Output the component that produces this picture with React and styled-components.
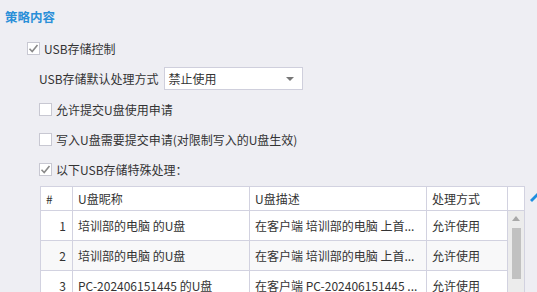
import React from 'react'
import styled, { createGlobalStyle } from 'styled-components'

const Global = createGlobalStyle`
  html, body {
    margin: 0;
    background: #eeeef3;
    overflow: hidden;
  }
  body {
    font-family: "Noto Sans CJK SC", "Noto Sans", sans-serif;
    font-size: 12px;
    color: #333;
  }
`

const rows = [
  { id: 1, name: '培训部的电脑 的U盘', desc: '在客户端 培训部的电脑 上首...', mode: '允许使用' },
  { id: 2, name: '培训部的电脑 的U盘', desc: '在客户端 培训部的电脑 上首...', mode: '允许使用' },
  { id: 3, name: 'PC-202406151445 的U盘', desc: '在客户端 PC-202406151445 ...', mode: '允许使用' },
]

export default function App() {
  return (
    <Page>
      <Global />
      <Title>策略内容</Title>
      <Section>
        <CheckRow>
          <Check checked />
          <span>USB存储控制</span>
        </CheckRow>
        <Sub>
          <SelectRow>
            <span>USB存储默认处理方式</span>
            <Select>
              <span>禁止使用</span>
              <Caret />
            </Select>
          </SelectRow>
          <CheckRow $top={9}>
            <Check />
            <span>允许提交U盘使用申请</span>
          </CheckRow>
          <CheckRow $top={10}>
            <Check />
            <span>写入U盘需要提交申请(对限制写入的U盘生效)</span>
          </CheckRow>
          <CheckRow $top={10}>
            <Check checked />
            <span>以下USB存储特殊处理：</span>
          </CheckRow>
          <TableWrap>
            <Table>
              <Head>
                <HCell>#</HCell>
                <HCell>U盘昵称</HCell>
                <HCell>U盘描述</HCell>
                <HCell>处理方式</HCell>
                <HCell $last />
              </Head>
              <Body>
                <Rows>
                  {rows.map((r, i) => (
                    <Row key={r.id} $alt={i % 2 === 1}>
                      <Cell $num>{r.id}</Cell>
                      <Cell>{r.name}</Cell>
                      <Cell>{r.desc}</Cell>
                      <Cell>{r.mode}</Cell>
                    </Row>
                  ))}
                </Rows>
                <Track>
                  <UpArrow />
                  <Thumb />
                </Track>
              </Body>
            </Table>
            <EditIcon viewBox="0 0 12 12">
              <path d="M1 10 L8 3 L10 5 L3 12 Z" fill="#1e8ee0" />
              <path d="M9 2 L10.5 0.5 L12.5 2.5 L11 4 Z" fill="#1e8ee0" />
            </EditIcon>
          </TableWrap>
        </Sub>
      </Section>
    </Page>
  )
}

function Check({ checked }) {
  return (
    <Box>
      {checked && (
        <svg width="11" height="11" viewBox="0 0 11 11">
          <path d="M1.5 5.8 L4.2 8.5 L9.5 2" stroke="#8a8a8a" strokeWidth="1.6" fill="none" />
        </svg>
      )}
    </Box>
  )
}

const Page = styled.div`
  padding: 8px 0 0 5px;
  height: 292px;
  box-sizing: border-box;
  overflow: hidden;
`

const Title = styled.div`
  height: 18px;
  line-height: 18px;
  font-size: 12.5px;
  font-weight: bold;
  color: #2a8fd8;
`

const Section = styled.div`
  padding-left: 22px;
  margin-top: 12px;
`

const Sub = styled.div`
  padding-left: 12px;
`

const CheckRow = styled.div`
  display: flex;
  align-items: center;
  gap: 4px;
  height: 20px;
  margin-top: ${p => p.$top || 0}px;
`

const Box = styled.span`
  width: 13px;
  height: 13px;
  box-sizing: border-box;
  border: 1px solid #c8c8d2;
  background: #fff;
  display: flex;
  align-items: center;
  justify-content: center;
`

const SelectRow = styled.div`
  display: flex;
  align-items: center;
  gap: 5px;
  margin-top: 9px;
  height: 23px;
`

const Select = styled.div`
  width: 139px;
  height: 23px;
  box-sizing: border-box;
  border: 1px solid #cfcfdc;
  background: #fff;
  display: flex;
  align-items: center;
  justify-content: space-between;
  padding: 0 8px 0 4px;
`

const Caret = styled.span`
  width: 0;
  height: 0;
  border-left: 4px solid transparent;
  border-right: 4px solid transparent;
  border-top: 4px solid #777;
`

const TableWrap = styled.div`
  display: flex;
  align-items: flex-start;
  gap: 4px;
  margin-top: 7px;
  margin-left: 1px;
`

const Table = styled.div`
  width: 485px;
  flex-shrink: 0;
  border: 1px solid #d2d2e0;
  box-sizing: border-box;
  background: #fff;
`

const cols = '32px 177px 177px 81px 16px'

const Head = styled.div`
  display: grid;
  grid-template-columns: ${cols};
  height: 23px;
  border-bottom: 1px solid #d2d2e0;
  background: #fff;
`

const HCell = styled.div`
  line-height: 23px;
  padding: 0 6px 0 5px;
  border-right: ${p => (p.$last ? 'none' : '1px solid #d2d2e0')};
  white-space: nowrap;
  overflow: hidden;
`

const Body = styled.div`
  display: flex;
`

const Rows = styled.div`
  width: 467px;
  border-right: 1px solid #d2d2e0;
`

const Row = styled.div`
  display: grid;
  grid-template-columns: 32px 177px 177px 80px;
  height: 29px;
  border-bottom: 1px solid #d2d2e0;
  background: ${p => (p.$alt ? '#f8f8f9' : '#fff')};
`

const Cell = styled.div`
  line-height: 29px;
  padding: 0 6px 0 5px;
  border-right: 1px solid #d2d2e0;
  white-space: nowrap;
  overflow: hidden;
  text-align: ${p => (p.$num ? 'right' : 'left')};
  &:last-child {
    border-right: none;
  }
`

const Track = styled.div`
  width: 16px;
  background: #ececec;
  display: flex;
  flex-direction: column;
  align-items: center;
  padding-top: 5px;
`

const UpArrow = styled.span`
  width: 0;
  height: 0;
  border-left: 4px solid transparent;
  border-right: 4px solid transparent;
  border-bottom: 5px solid #a8a8a8;
`

const Thumb = styled.span`
  width: 9px;
  height: 51px;
  margin-top: 7px;
  background: #c1c1c1;
`

const EditIcon = styled.svg`
  width: 12px;
  height: 12px;
  margin-top: 4px;
  flex-shrink: 0;
`
